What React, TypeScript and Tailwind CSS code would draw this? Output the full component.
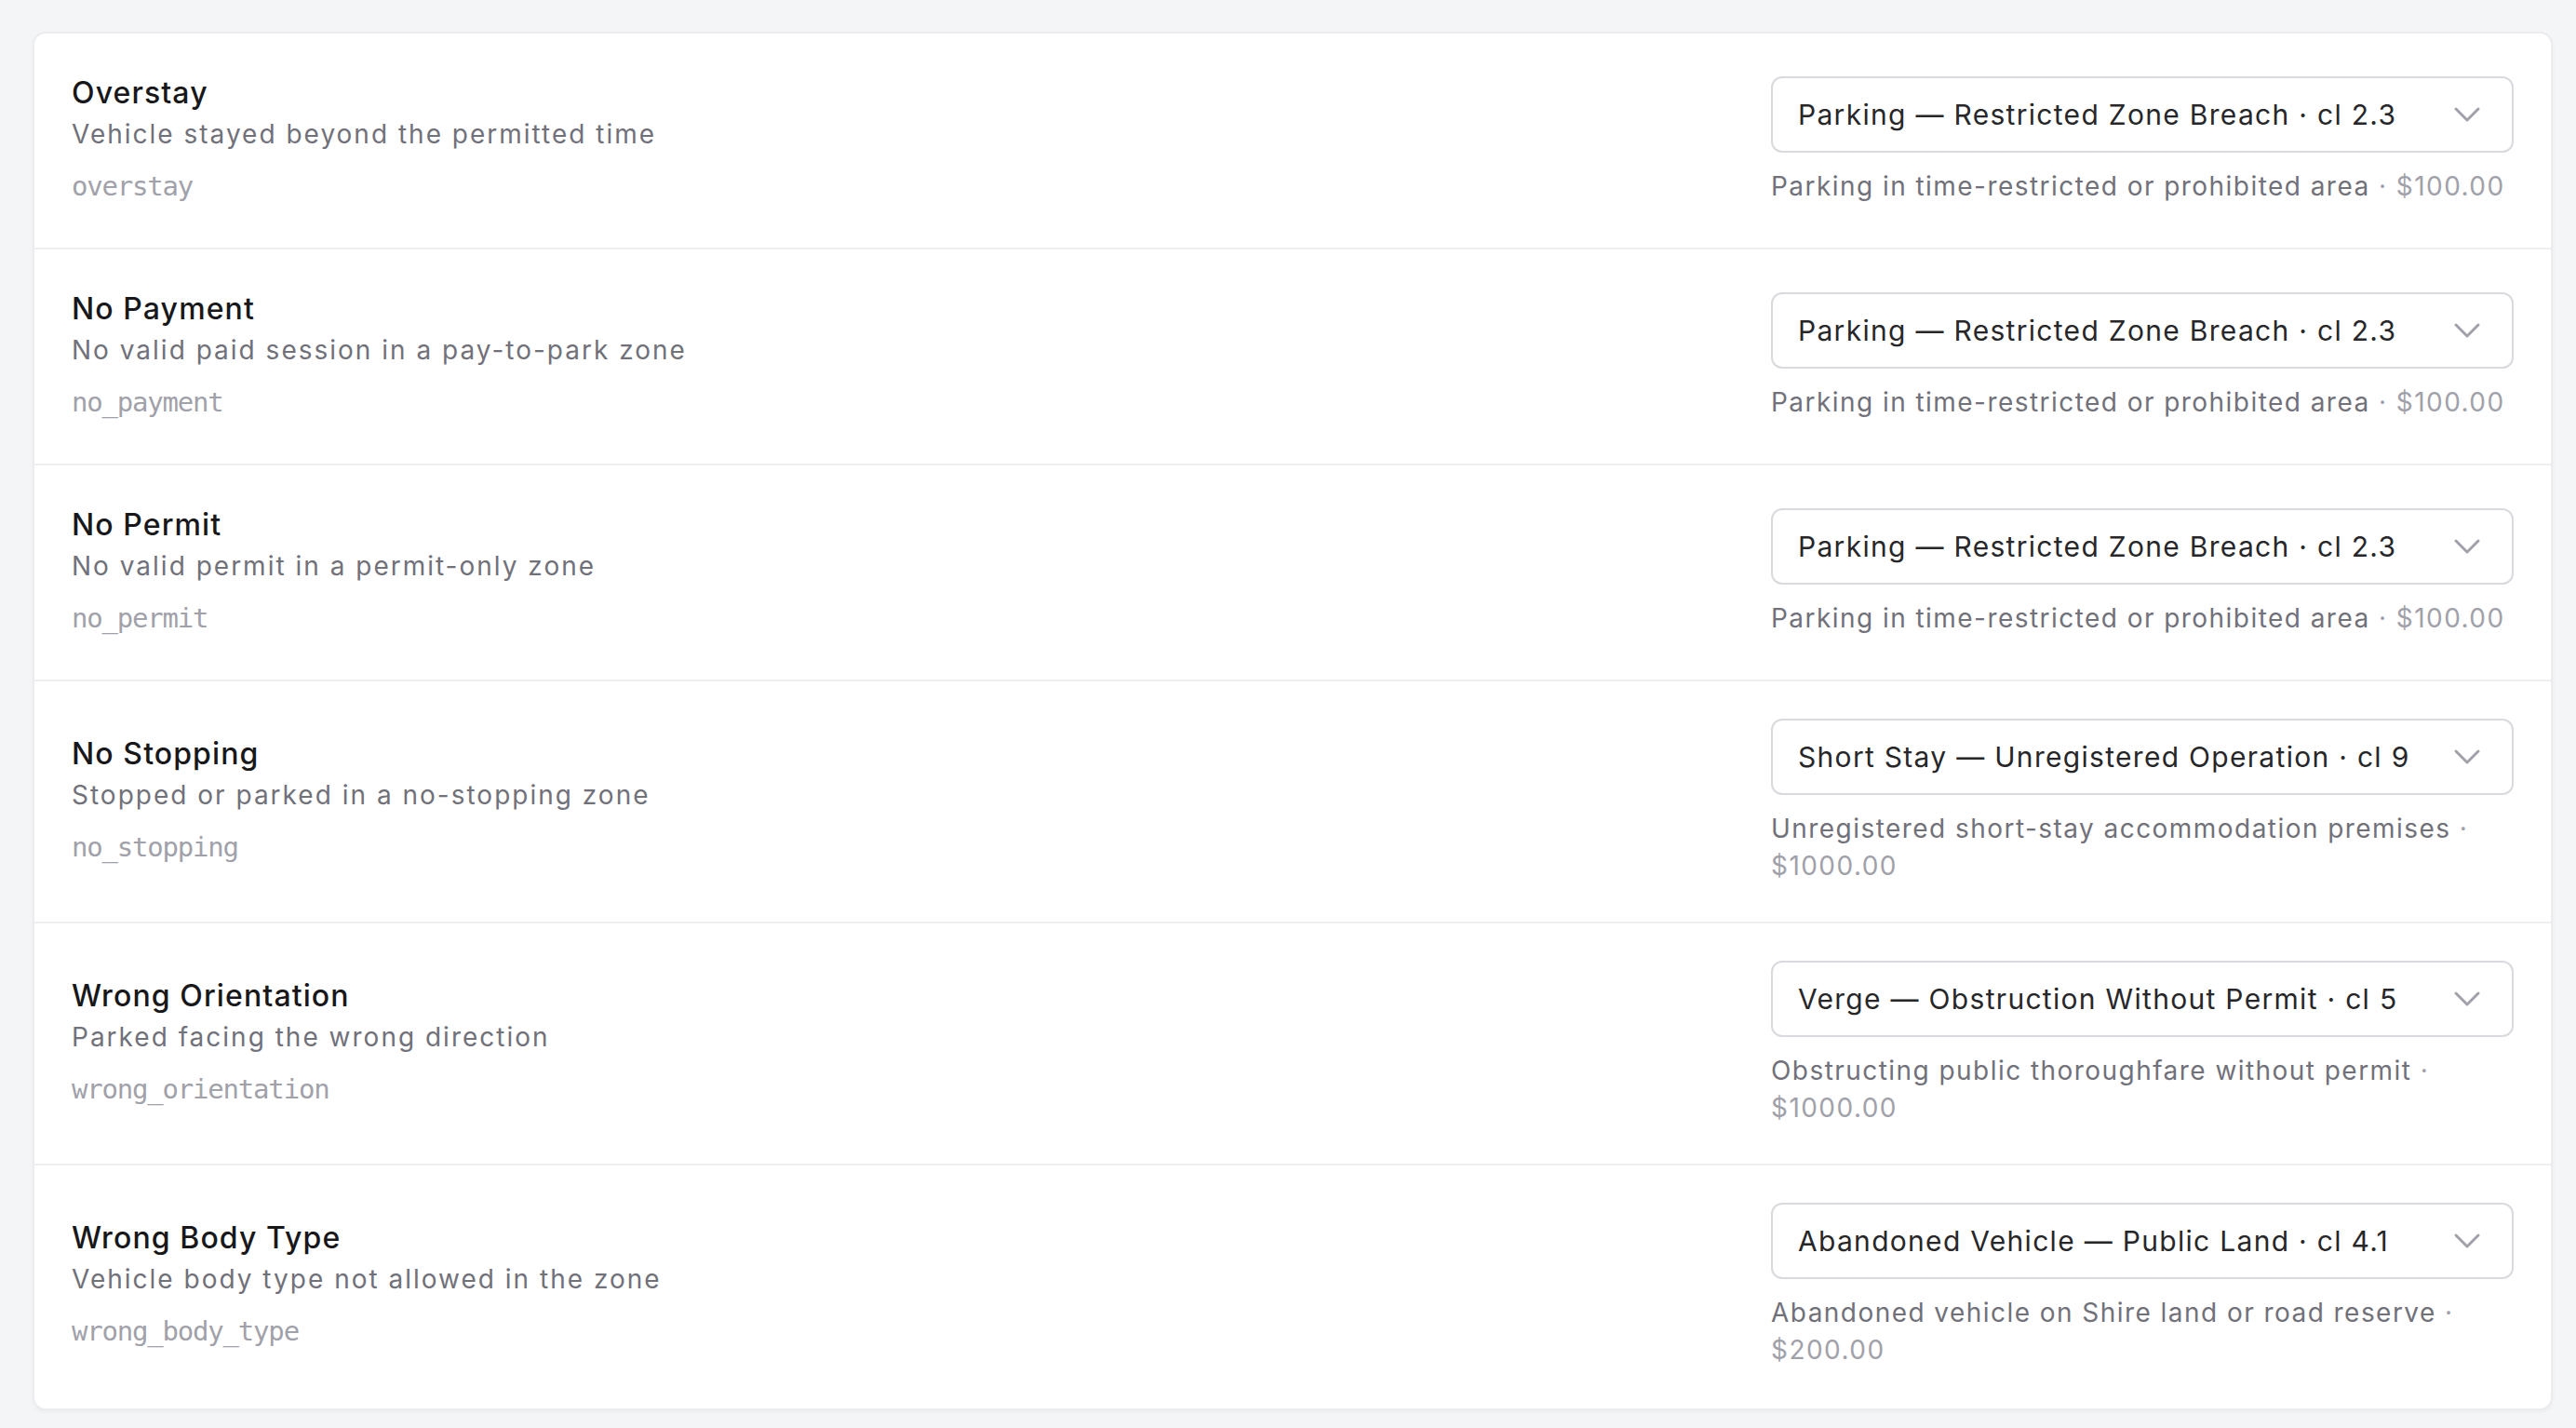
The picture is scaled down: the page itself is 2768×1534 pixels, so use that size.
import React from 'react'
import { ChevronDown } from 'lucide-react'

interface rule {
    id: string,
    title: string,
    description: string,
    clause: string,
    helper: string,
    price: string,
}

const rules: rule[] = [
    {
        id: "overstay",
        title: "Overstay",
        description: "Vehicle stayed beyond the permitted time",
        clause: "Parking — Restricted Zone Breach · cl 2.3",
        helper: "Parking in time-restricted or prohibited area",
        price: "$100.00",
    },
    {
        id: "no_payment",
        title: "No Payment",
        description: "No valid paid session in a pay-to-park zone",
        clause: "Parking — Restricted Zone Breach · cl 2.3",
        helper: "Parking in time-restricted or prohibited area",
        price: "$100.00",
    },
    {
        id: "no_permit",
        title: "No Permit",
        description: "No valid permit in a permit-only zone",
        clause: "Parking — Restricted Zone Breach · cl 2.3",
        helper: "Parking in time-restricted or prohibited area",
        price: "$100.00",
    },
    {
        id: "no_stopping",
        title: "No Stopping",
        description: "Stopped or parked in a no-stopping zone",
        clause: "Short Stay — Unregistered Operation · cl 9",
        helper: "Unregistered short-stay accommodation premises",
        price: "$1000.00",
    },
    {
        id: "wrong_orientation",
        title: "Wrong Orientation",
        description: "Parked facing the wrong direction",
        clause: "Verge — Obstruction Without Permit · cl 5",
        helper: "Obstructing public thoroughfare without permit",
        price: "$1000.00",
    },
    {
        id: "wrong_body_type",
        title: "Wrong Body Type",
        description: "Vehicle body type not allowed in the zone",
        clause: "Abandoned Vehicle — Public Land · cl 4.1",
        helper: "Abandoned vehicle on Shire land or road reserve",
        price: "$200.00",
    },
]

const RuleRow = ({ item, last }: { item: rule, last: boolean }) => {
    return (
        <div className={`flex items-center justify-between gap-10 px-10 pt-10 ${last ? 'pb-[43px]' : 'pb-10 border-b-2 border-[#efeff1]'}`}>
            <div className="flex flex-col min-w-0">
                <div className="text-[32px] leading-[48px] font-medium text-[#18181b] tracking-[1.1px]">{item.title}</div>
                <div className="text-[28px] leading-[40px] text-[#71717a] tracking-[2px]">{item.description}</div>
                <div className="mt-[10px] text-[29px] leading-[52px] tracking-[-1.2px] text-[#a1a1aa]" style={{ fontFamily: '"DejaVu Sans Mono", monospace' }}>{item.id}</div>
            </div>
            <div className="w-[798px] shrink-0 flex flex-col">
                <div className="h-[82px] flex items-center justify-between pl-[27px] pr-[24px] border-2 border-[#d9d9de] rounded-[12px] bg-white">
                    <span className="text-[30px] text-[#27272a] tracking-[1.3px] whitespace-nowrap">{item.clause}</span>
                    <ChevronDown size={48} strokeWidth={1.5} className="text-[#a1a1aa] shrink-0" />
                </div>
                <div className="mt-4 text-[28px] leading-[40px] text-[#71717a] tracking-[1.45px]">
                    {item.helper}<span className="text-[#a1a1aa]"> · {item.price}</span>
                </div>
            </div>
        </div>
    )
}

export default function App() {
    return (
        <div className="min-h-screen bg-[#f4f5f7] pt-[34px] pl-[35px] pr-[25px] pb-[40px]" style={{ fontFamily: 'Inter, "Noto Sans", sans-serif' }}>
            <div className="bg-white border-2 border-[#ececef] rounded-[14px] shadow-[0_2px_4px_rgba(0,0,0,0.04)] overflow-hidden">
                {rules.map((item, index) => (
                    <RuleRow key={item.id} item={item} last={index === rules.length - 1} />
                ))}
            </div>
        </div>
    )
}
